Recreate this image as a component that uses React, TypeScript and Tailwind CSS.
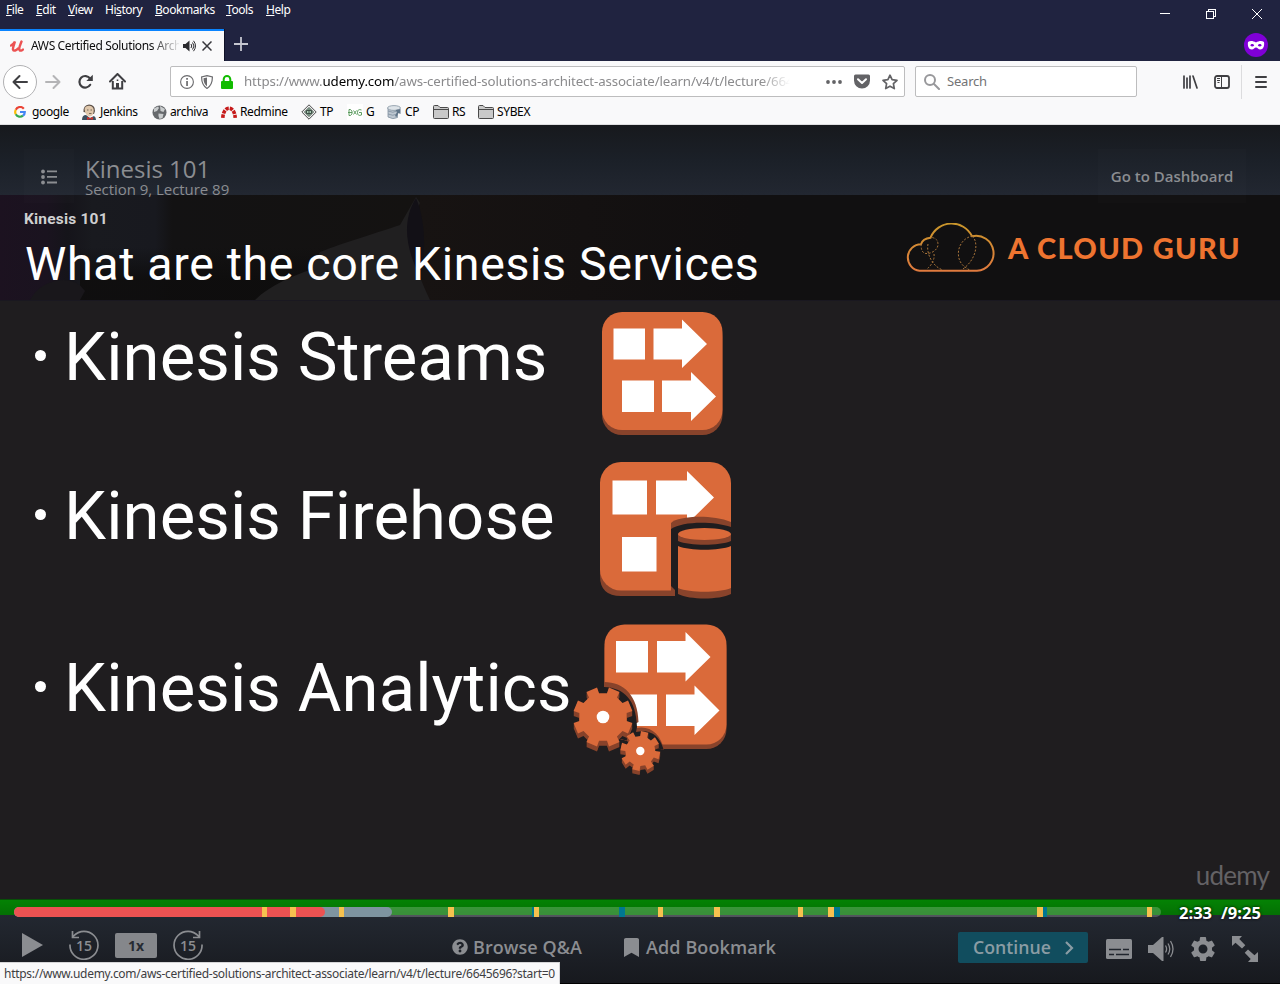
import React from "react";
import { FaQuestionCircle, FaBookmark } from "react-icons/fa";
import { MdSettings } from "react-icons/md";

const UI = "font-['Noto_Sans','Open_Sans',sans-serif]";
const OPEN = "font-['Open_Sans','Noto_Sans',sans-serif]";
const ROBOTO = "font-['Roboto',sans-serif]";

function MenuBar() {
  return (
    <div className="flex h-[29px] items-start">
      <nav className="flex pt-[2px] text-[12px] leading-4 tracking-[-0.45px] whitespace-nowrap text-white">
        <span className="ml-1.5 w-[30px]"><u>F</u>ile</span>
        <span className="w-8"><u>E</u>dit</span>
        <span className="w-[37px]"><u>V</u>iew</span>
        <span className="w-[50px]">Hi<u>s</u>tory</span>
        <span className="w-[71px]"><u>B</u>ookmarks</span>
        <span className="w-10"><u>T</u>ools</span>
        <span><u>H</u>elp</span>
      </nav>
      <svg className="mt-2 ml-auto h-3 w-[104px]" viewBox="0 0 104 12" fill="none" stroke="#fff" shapeRendering="crispEdges">
        <path d="M0 5.500h10M46.500 3.500h7v7h-7zM48.500 3V1.500h7v7H54" />
        <path d="M92 1l10 10M102 1L92 11" shapeRendering="auto" />
      </svg>
      <div className="w-4" />
    </div>
  );
}

function TabStrip() {
  return (
    <div className="flex h-8 items-stretch">
      <div className="flex w-[224px] items-center border-t-2 border-[#0a84ff] bg-[#f9f9fa]">
        <svg className="ml-[10px] h-3 w-[14px]" viewBox="0 0 14 12" fill="none" stroke="#ec5252" strokeWidth="2.400" strokeLinecap="round">
          <path d="M1 5.500C3 4.500 4.500 2.800 5 1.500C4 5 2.500 8 3 9.500C3.700 11.500 6.500 10.500 8 8.500M11.500 1.500C10.500 4 8.500 8 9.500 10C10.300 11.200 12 10.500 13 9.500" />
        </svg>
        <div className="ml-[7px] w-[148px] overflow-hidden text-[12px] tracking-[-0.36px] whitespace-nowrap text-[#0c0c0d] [mask-image:linear-gradient(to_right,#000_120px,transparent_150px)]">
          AWS Certified Solutions Architect
        </div>
        <svg className="ml-1 h-3 w-[13px]" viewBox="0 0 13 12">
          <path fill="#2a2a2e" d="M0 4h2.500L6.500.5v11L2.500 8H0z" />
          <path fill="none" stroke="#2a2a2e" d="M8 4q1.500 2 0 4M9.500 2.500q3 3.500 0 7M10.500 .8q4 5 0 10.400" />
        </svg>
        <svg className="ml-[6px] h-[10px] w-[10px]" viewBox="0 0 10 10" stroke="#38383d" strokeWidth="1.500"><path d="M.5.5l9 9M9.500.5l-9 9" /></svg>
      </div>
      <div className="flex w-8 items-center border-l border-[#0f1126] pl-[9px]">
        <svg className="-mt-[2px] h-[14px] w-[14px]" viewBox="0 0 14 14" stroke="#c5c6d0" strokeWidth="1.800"><path d="M7 0v14M0 7h14" /></svg>
      </div>
      <svg className="mt-1 mr-3 ml-auto h-6 w-6" viewBox="0 0 24 24">
        <circle cx="12" cy="12" r="12" fill="#8000d7" />
        <path fill="#fff" fillRule="evenodd" d="M4 9c2-1.500 5-1.300 8 .5 3-1.800 6-2 8-.5.7 4-.8 7.500-3.800 7.500-1.900 0-2.700-2-4.200-2s-2.300 2-4.200 2C4.800 16.500 3.300 13 4 9zm2.300 3.500c1 1.200 2.900 1.200 3.900 0-1-1.900-3.100-1.900-3.900 0zm7.500 0c1 1.200 2.900 1.200 3.900 0-.8-1.900-2.900-1.900-3.900 0z" />
      </svg>
    </div>
  );
}

function NavBar() {
  return (
    <div className="flex h-[41px] items-center bg-[#f9f9fa]">
      <div className="ml-[3px] flex h-[34px] w-[34px] items-center justify-center rounded-full border border-[#b1b1b3] bg-white">
        <svg className="h-4 w-4" viewBox="0 0 16 16" fill="none" stroke="#3f3f42" strokeWidth="2" strokeLinecap="round" strokeLinejoin="round"><path d="M15 8H1.500M7.500 2l-6 6 6 6" /></svg>
      </div>
      <svg className="ml-2 h-4 w-4" viewBox="0 0 16 16" fill="none" stroke="#b4b4b6" strokeWidth="2" strokeLinecap="round" strokeLinejoin="round"><path d="M1 8h13.500M8.500 2l6 6-6 6" /></svg>
      <svg className="ml-4 h-4 w-4" viewBox="0 0 16 16"><path d="M13.200 10.800A5.800 5.800 0 1 1 13 4.500" fill="none" stroke="#3f3f42" strokeWidth="2.200" strokeLinecap="round" /><path fill="#3f3f42" d="M15.800.8V7H9.300z" /></svg>
      <svg className="ml-4 h-[17px] w-[17px]" viewBox="0 0 17 17"><path d="M1 8.500L8.500 1 16 8.500" fill="none" stroke="#3f3f42" strokeWidth="2" strokeLinecap="round" strokeLinejoin="round" /><path d="M3.800 8v7.500h9.400V8" fill="none" stroke="#3f3f42" strokeWidth="2" /><path fill="#3f3f42" d="M7 10h3v6H7zM7.700 6.500h1.600v1.500H7.700z" /></svg>
      <div className="ml-11 flex h-[31px] w-[735px] items-center rounded-[2px] border border-[#bdbdbe] bg-white">
        <svg className="ml-[9px] h-[14px] w-[14px]" viewBox="0 0 14 14"><circle cx="7" cy="7" r="6.400" fill="none" stroke="#6b6b6e" strokeWidth="1.100" /><path fill="#6b6b6e" d="M6.200 6h1.700v5H6.200zM6.200 3h1.700v1.700H6.200z" /></svg>
        <svg className="ml-[7px] h-[14px] w-3" viewBox="0 0 12 14"><path d="M6 .6L11.400 2c0 6-1.400 9-5.400 11.400C2 11 .6 8 .6 2z" fill="none" stroke="#6b6b6e" strokeWidth="1.200" /><path fill="#6b6b6e" d="M6 2.500v9C3.500 9.500 2.500 7 2.500 3.300z" /></svg>
        <svg className="ml-2 h-[14px] w-3" viewBox="0 0 12 14"><rect y="6" width="12" height="8" rx="1" fill="#12bc00" /><path d="M2.700 7V4.300a3.300 3.300 0 0 1 6.600 0V7" fill="none" stroke="#12bc00" strokeWidth="2" /></svg>
        <div className="mt-px ml-[11px] w-[546px] overflow-hidden text-[13.300px] tracking-[-0.14px] whitespace-nowrap text-[#8a8a8c] [mask-image:linear-gradient(to_right,#000_516px,transparent_546px)]">
          https://www.<span className="text-black">udemy.com</span>/aws-certified-solutions-architect-associate/learn/v4/t/lecture/6645696
        </div>
        <svg className="ml-9 h-4 w-4" viewBox="0 0 16 16" fill="#636366"><circle cx="2" cy="8" r="1.900" /><circle cx="8" cy="8" r="1.900" /><circle cx="14" cy="8" r="1.900" /></svg>
        <svg className="ml-[12px] h-[15px] w-4" viewBox="0 0 16 15"><path fill="#636366" d="M1.500.5h13A1.500 1.500 0 0 1 16 2v4.500a8 8 0 0 1-16 0V2A1.500 1.500 0 0 1 1.500.5z" /><path d="M4 5.200l4 3.800 4-3.800" fill="none" stroke="#fff" strokeWidth="2" strokeLinecap="round" strokeLinejoin="round" /></svg>
        <svg className="ml-3 h-4 w-4" viewBox="0 0 16 16"><path d="M8 1.200l2.100 4.500 4.900.6-3.600 3.400.9 4.900L8 12.200l-4.300 2.400.9-4.900L1 6.300l4.900-.6z" fill="none" stroke="#636366" strokeWidth="1.700" strokeLinejoin="round" /></svg>
      </div>
      <div className="ml-[10px] flex h-[31px] w-[222px] items-center rounded-[2px] border border-[#bdbdbe] bg-white">
        <svg className="ml-2 h-4 w-4" viewBox="0 0 16 16" fill="none" stroke="#98989b" strokeWidth="2" strokeLinecap="round"><circle cx="6" cy="6" r="5" /><path d="M10 10l5 5" /></svg>
        <span className="mt-px ml-[7px] text-[13px] tracking-[-0.2px] text-[#737375]">Search</span>
      </div>
      <svg className="ml-[46px] h-[14px] w-[15px]" viewBox="0 0 15 14" stroke="#3f3f42" strokeWidth="1.700" strokeLinecap="round"><path d="M1 1v12M4 3v10M7 1v12M10 1l4 12" /></svg>
      <svg className="ml-4 h-4 w-4" viewBox="0 0 16 16"><rect x="1" y="2" width="14" height="12" rx="2" fill="none" stroke="#3f3f42" strokeWidth="1.800" /><path stroke="#3f3f42" d="M7.500 2v12M3 4.500h3M3 6.500h3M3.500 8.500h2" /></svg>
      <div className="ml-[11px] h-[34px] w-px bg-[#dcdcde]" />
      <svg className="ml-[13px] h-3 w-3" viewBox="0 0 12 12" stroke="#3f3f42" strokeWidth="2" strokeLinecap="round"><path d="M1 1h10M1 6h10M1 11h10" /></svg>
    </div>
  );
}

function FolderIcon() {
  return (
    <svg className="h-[14px] w-4" viewBox="0 0 16 14" fill="#c9c9c9" stroke="#4a4a4a"><path d="M.5 12.500V1.500q0-1 1-1h3.500l2 2h7.500q1 0 1 1v9q0 1-1 1h-13q-1 0-1-1z" /><path d="M.5 4.500h15" /></svg>
  );
}

const MARKS: { label: string; width: string; icon: React.ReactNode }[] = [
  { label: "google", width: "w-[68px]", icon: <svg className="h-3 w-3 shrink-0" viewBox="0 0 12 12" fill="none" strokeWidth="2.200"><path stroke="#ea4335" d="M9.800 2.700A4.800 4.800 0 0 0 1.800 3.700" /><path stroke="#fbbc05" d="M1.800 3.700a4.800 4.800 0 0 0 0 4.600" /><path stroke="#34a853" d="M1.800 8.300A4.800 4.800 0 0 0 9 9.700" /><path stroke="#4285f4" d="M9 9.700A4.600 4.600 0 0 0 10.800 6H6" /></svg> },
  { label: "Jenkins", width: "w-[71px]", icon: <svg className="h-4 w-4 shrink-0" viewBox="0 0 16 16"><path fill="#5c5048" d="M2.500 8Q2 1 8 .5q6 0 6 6.500l-1 3z" /><path fill="#e0c8ac" d="M3.500 5q1-3.500 5-3.200 4.500.7 4.200 5.200-.4 5-4 5.500-3.200-.5-4.400-4z" /><path fill="#3d5060" d="M1 16q0-5 4-5l4 3 4-2q2 1 2 4z" /><path fill="#c8322e" d="M6 13l3 1 3-1v3l-3-1-3 1z" /><path stroke="#5c5048" strokeWidth=".8" d="M6 6h1.500M9.500 6H11M8 9.500h2.500" /></svg> },
  { label: "archiva", width: "w-[69px]", icon: <svg className="h-[15px] w-[15px] shrink-0" viewBox="0 0 15 15"><circle cx="7.500" cy="7.500" r="7" fill="#66696c" /><path fill="#c9cccd" d="M2 3.500L6 1.500l1 1.500-2 3-3 1zM8 1l5 3-1.500 3-3-1zM6.500 8.500l5 .5-1 4-3 1-1-3z" /></svg> },
  { label: "Redmine", width: "w-[80px]", icon: <svg className="h-3 w-4 shrink-0" viewBox="0 0 16 12"><path d="M1.800 11.800C2.500 -1 13.500 -1 14.200 11.800" fill="none" stroke="#c61a1a" strokeWidth="3.600" strokeDasharray="3.400 1" /></svg> },
  { label: "TP", width: "w-[46px]", icon: <svg className="h-4 w-4 shrink-0" viewBox="0 0 16 16" fill="none" stroke="#4b4b4b"><path fill="#eee" d="M8 .8L15.200 8 8 15.200.8 8z" /><path fill="#a9cdb4" stroke="#3f4f46" d="M8 3.500L12.500 8 8 12.500 3.500 8zM5.500 6.500h5v3h-5zM8 5v6" /></svg> },
  { label: "G", width: "w-[40px]", icon: <div className="flex h-4 w-4 shrink-0 items-center justify-center bg-white"><svg className="h-[7px] w-[14px]" viewBox="0 0 14 7" fill="none" stroke="#4f9452" strokeWidth=".9"><path d="M0 3.500h4M1 .5h1.500q3.500 3 0 6H1zM5.500 1.500l3 4M5.500 5.500l3-4M13.500 1q-4-1.500-4 2.500t4 2.500V3.500H11" /></svg></div> },
  { label: "CP", width: "w-[46px]", icon: <svg className="h-[15px] w-[15px] shrink-0" viewBox="0 0 15 15"><path fill="#bcc6d0" stroke="#8090a0" strokeWidth=".8" d="M1 3v9q5 3 9.500.5V3z" /><ellipse cx="7" cy="3" rx="6.500" ry="2.400" fill="#dde3e8" stroke="#8594a2" strokeWidth=".8" /><path d="M1 6q5 2.500 9 0M1 9q5 2.500 9 0" stroke="#8090a0" strokeWidth=".8" fill="none" /><path fill="#5f7488" d="M8.500 5l5-1v5l-2-1-2 4-1.500-1 2-4z" /></svg> },
  { label: "RS", width: "w-[45px]", icon: <FolderIcon /> },
  { label: "SYBEX", width: "w-[60px]", icon: <FolderIcon /> },
];

function BookmarksBar() {
  return (
    <div className="flex h-[23px] items-center border-b border-[#dfdfe1] bg-[#f9f9fa] pb-[2px] pl-[13px] text-[12px] tracking-[-0.36px] text-black">
      {MARKS.map((m) => (
        <div key={m.label} className={"flex shrink-0 items-center whitespace-nowrap " + m.width}>
          <div className={m.label === "google" ? "mr-[6px] ml-px" : "mr-[3px]"}>{m.icon}</div>
          {m.label}
        </div>
      ))}
    </div>
  );
}

function LectureHeader() {
  return (
    <header className={"relative z-10 flex h-[70px] items-start bg-linear-to-b from-[#17191d] via-[#1b2028] to-[#222731] pt-6 text-[#8b8d91] " + OPEN}>
      <div className="ml-6 flex h-[54px] w-[50px] items-center justify-center bg-white/1">
        <svg className="mt-px h-4 w-4" viewBox="0 0 16 16" fill="#8b8d91"><circle cx="2" cy="2.500" r="1.900" /><circle cx="2" cy="8" r="1.900" /><circle cx="2" cy="13.500" r="1.900" /><path d="M6 1.500h10v1.800H6zM6 7h10v1.800H6zM6 12.600h10v1.800H6z" /></svg>
      </div>
      <div className="ml-[11px] whitespace-nowrap">
        <div className="mt-[5px] text-[24px] leading-[30px]">Kinesis 101</div>
        <div className="-mt-px text-[15px] leading-3 tracking-[-0.04px]">Section 9, Lecture 89</div>
      </div>
      <div className="mr-[34px] ml-auto flex h-[54px] w-[148px] items-center justify-center bg-white/1 text-[15px] font-semibold whitespace-nowrap">Go to Dashboard</div>
    </header>
  );
}

function CloudLogo() {
  return (
    <svg className="h-[50px] w-[92px]" viewBox="905 223 92 50" fill="none">
      <defs>
        <linearGradient id="cloud" x1="0" y1="0" x2="0" y2="1"><stop offset="0" stopColor="#c9962b" /><stop offset="1" stopColor="#e07a3e" /></linearGradient>
      </defs>
      <path stroke="url(#cloud)" strokeWidth="2" d="M919.500 270.700a13.300 13.300 0 0 1 1.500-26.500c1-3.500 4.500-6 9.500-6.500a22.800 22.800 0 0 1 41.500-1.500a17.500 17.500 0 1 1 5 34.500z" />
      <g stroke="#a8743a" strokeWidth="1" strokeDasharray="2 1.600"><path d="M921 244q0 10 6 9.500c5 0 11-4 11-9q0-6-6-7M928 244c-2 10 5 23 15 26M934 254q1 8-7 15M972.500 236c-16 3-19 25-6 32l3 2M972.500 236c7 8 3 25-11 34" /></g>
    </svg>
  );
}

function Banner() {
  return (
    <div className="grid h-[105px] bg-[#111011] *:col-start-1 *:row-start-1">
      <svg className="h-[105px] w-[1280px]" viewBox="0 0 1280 105">
        <defs>
          <linearGradient id="left"><stop offset="0" stopColor="#1c1220" /><stop offset=".11" stopColor="#1a131f" /><stop offset=".16" stopColor="#15141a" /><stop offset=".22" stopColor="#191a1f" /><stop offset=".37" stopColor="#18191f" /><stop offset=".41" stopColor="#131213" /><stop offset="1" stopColor="#141211" /></linearGradient>
          <linearGradient id="shade" x1="0" y1="0" x2="0" y2="1"><stop offset=".5" stopColor="#0e0d0d" stopOpacity="0" /><stop offset=".8" stopColor="#0e0d0d" stopOpacity=".9" /></linearGradient>
          <linearGradient id="right"><stop offset="0" stopColor="#171312" /><stop offset="1" stopColor="#110f10" /></linearGradient>
        </defs>
        <rect width="420" height="105" fill="url(#left)" />
        <rect x="80" width="340" height="105" fill="url(#shade)" />
        <rect x="420" width="330" height="105" fill="url(#right)" />
        <path fill="#201f20" d="M255 105c15-15 40-25 55-30l10-18c25-10 60-20 80-27l16-28 4 6c-14 30-8 60 10 97z" />
        <path fill="#121016" d="M416 3c-14 22-11 50 4 78 6-20 6-55-4-78z" />
        <path fill="#19171b" d="M55 86q20-4 30 10l-5 9H30q8-15 25-19z" />
      </svg>
      <div className={"flex items-start pl-6 " + ROBOTO}>
        <div className="whitespace-nowrap">
          <div className="mt-[14px] text-[15.500px] leading-5 font-bold tracking-[0.2px] text-[#cfcfd0]">Kinesis 101</div>
          <div className="mt-[9px] pl-px text-[46.500px] leading-[52px] tracking-[0.66px] text-white">What are the core Kinesis Services</div>
        </div>
        <div className="mt-[28px] ml-auto flex w-[375px] items-center">
          <CloudLogo />
          <span className="-mt-px ml-[11px] font-['Lato',sans-serif] text-[29px] leading-9 font-black tracking-[1.35px] whitespace-nowrap text-[#ee7430]">A CLOUD GURU</span>
        </div>
      </div>
    </div>
  );
}

function gear(cx: number, cy: number, outer: number, inner: number, start: number) {
  const pts: string[] = [];
  for (let i = 0; i < 8; i++) {
    const mid = start + i * 45;
    const corners: [number, number][] = [[inner, -13], [outer, -11], [outer, 11], [inner, 13]];
    for (const [r, d] of corners) {
      const a = ((mid + d) * Math.PI) / 180;
      pts.push((cx + r * Math.cos(a)).toFixed(2) + "," + (cy + r * Math.sin(a)).toFixed(2));
    }
  }
  return pts.join(" ");
}

function Gear({ cx, cy, outer, inner, start, hole, depth }: { cx: number; cy: number; outer: number; inner: number; start: number; hole: number; depth: number }) {
  const points = gear(cx, cy, outer, inner, start);
  return (
    <g>
      {Array.from({ length: depth }, (_, i) => <polygon key={i} points={points} fill="#88432b" transform={"translate(0 " + (depth - i) + ")"} />)}
      <polygon points={points} fill="#da6a3a" />
      <circle cx={cx} cy={cy} r={hole} fill="#fff" />
    </g>
  );
}

function StreamsIcon() {
  return (
    <svg className="h-[126px] w-[122px]" viewBox="601 310 122 126">
      <rect x="602" y="317" width="120.500" height="118" rx="20" fill="#88432b" />
      <rect x="602" y="312" width="120.500" height="118" rx="20" fill="#da6a3a" />
      <path fill="#fff" d="M613.500 328.500h31.500v31h-31.500zM653.500 328.500h28.500v-9l25 24.500-25 24v-8.500h-28.500zM622 380.500h32v31.500h-32zM662 380.500h29v-8.500l25 24.500-25 24.500v-9h-29z" />
    </svg>
  );
}

function FirehoseIcon() {
  return (
    <svg className="h-[138px] w-[133px]" viewBox="599 461 133 138">
      <path fill="#88432b" d="M600 482v94q0 20 21 20h54v-10h56V490z" />
      <rect x="600" y="462" width="131" height="128.500" rx="21" fill="#da6a3a" />
      <path fill="#fff" d="M612.500 480.500h34.500v34h-34.500zM656 480.500h31v-9.500l27 26.500-27 26.500v-9.500h-31zM622 537h34.500v34.500h-34.500z" />
      <path fill="#88432b" d="M671 530v-7c7-7 40-9 60-1v12z" />
      <path fill="#1f1d1f" d="M671 599v-70c12-8 42-8 60-2v72z" />
      <path fill="#88432b" d="M671 586l4 4v6h-4z" />
      <path fill="#da6a3a" d="M678 546c12 5 41 5 53 0v44c-12 6-41 6-53 0z" />
      <path fill="#88432b" d="M678 588c12 5 41 5 53 0v6c-12 6-41 6-53 0zM678 534v7c12 5 41 5 53 0v-7z" />
      <ellipse cx="704.500" cy="534" rx="26.500" ry="6" fill="#da6a3a" />
    </svg>
  );
}

function AnalyticsIcon() {
  return (
    <svg className="h-[154px] w-[156px]" viewBox="573 623 156 154">
      <defs><clipPath id="tile"><path d="M604 623h124v127H664L604 735z" /></clipPath></defs>
      <g clipPath="url(#tile)">
        <rect x="604.500" y="629" width="122" height="120" rx="20" fill="#88432b" />
        <rect x="604.500" y="624.500" width="122" height="120" rx="20" fill="#da6a3a" />
        <path fill="#fff" d="M616 641h32v31.500h-32zM657 641h28.500v-9l25 25-25 24.500v-9h-28.500zM625 694.500h32v31.500h-32zM666 694.500h28.500v-9l25 25-25 24.500v-9h-28.500z" />
        <path fill="#88432b" d="M604 682c20 0 34 14 34.500 40l-34.500 20zM636 728c14-3 25 6 28 22h-28z" />
        <path fill="#1f1d1f" d="M604 687c20 1 32 12 33 40l-1 5c14-3 24 3 28 19h-60z" />
      </g>
      <Gear cx={603} cy={717} outer={30} inner={24} start={-22.5} hole={6.3} depth={5} />
      <Gear cx={640.3} cy={751} outer={20} inner={15} start={13} hole={4.200} depth={4} />
    </svg>
  );
}

function Bullet({ text, size }: { text: string; size: string }) {
  return (
    <div className={"flex items-center whitespace-nowrap " + size}>
      <span className="ml-[35px] h-[11px] w-[11px] rounded-full bg-white" />
      <span className="mt-[3px] ml-[18px] text-[67px] leading-[78px] tracking-[0.1px] text-white">{text}</span>
    </div>
  );
}

function Slide() {
  return (
    <div className={"flex h-[599px] flex-col border-t border-[#1a1820] bg-[#1f1d1f] " + ROBOTO}>
      <div className="flex h-[160px] items-start pt-[9px]">
        <Bullet text="Kinesis Streams" size="w-[601px] h-[91px]" />
        <StreamsIcon />
      </div>
      <div className="flex h-[162px] items-start">
        <Bullet text="Kinesis Firehose" size="w-[599px] h-[107px]" />
        <FirehoseIcon />
      </div>
      <div className="flex h-[160px] items-start">
        <Bullet text="Kinesis Analytics" size="w-[573px] h-[127px]" />
        <AnalyticsIcon />
      </div>
      <div className="mt-auto mr-[11px] mb-[6px] self-end font-['Lato',sans-serif] text-[26px] leading-9 tracking-[-0.8px] text-[#646265]">udemy</div>
    </div>
  );
}

const TICKS = [
  { x: 262, w: 5, c: "bg-[#f6c14f]" }, { x: 290, w: 6, c: "bg-[#f6c14f]" }, { x: 339, w: 5, c: "bg-[#f6c14f]" },
  { x: 448, w: 6, c: "bg-[#f6c14f]" }, { x: 532, w: 2, c: "bg-[#007791]" }, { x: 534, w: 5, c: "bg-[#f6c14f]" },
  { x: 619, w: 6, c: "bg-[#007791]" }, { x: 658, w: 5, c: "bg-[#f6c14f]" }, { x: 714, w: 6, c: "bg-[#f6c14f]" },
  { x: 798, w: 5, c: "bg-[#f6c14f]" }, { x: 828, w: 6, c: "bg-[#f6c14f]" }, { x: 834, w: 6, c: "bg-[#007791]" },
  { x: 1037, w: 6, c: "bg-[#f6c14f]" }, { x: 1043, w: 4, c: "bg-[#007791]" }, { x: 1147, w: 5, c: "bg-[#f6c14f]" },
];

function Progress() {
  return (
    <div className="relative z-10 flex h-4 items-start border-t border-[#075007] bg-linear-to-b from-[#048204] to-[#047004] pl-[14px]">
      <div className="relative mt-[7px] h-[10px] w-[1147px] overflow-hidden rounded-[5px] bg-white/21">
        <div className="flex h-[10px] w-[378px] rounded-r-[5px] bg-[#7e94a0]">
          <div className="h-[10px] w-[311px] rounded-r-[5px] bg-[#ec5252]" />
        </div>
        {TICKS.map((t) => <i key={t.x} className={"absolute top-0 h-[10px] " + t.c} style={{ left: t.x - 14, width: t.w }} />)}
      </div>
      <div className={"ml-[18px] flex text-[16.500px] leading-[26px] font-bold whitespace-nowrap text-white [text-shadow:0_0_3px_#000] " + OPEN}>
        <span className="w-[42px]">2:33</span>
        <span>/9:25</span>
      </div>
    </div>
  );
}

function SkipIcon({ flip }: { flip?: boolean }) {
  return (
    <div className="grid h-8 w-[30px] place-items-center *:col-start-1 *:row-start-1">
      <svg className={"h-[30px] w-[30px] " + (flip ? "-scale-x-100" : "")} viewBox="0 0 30 30" fill="none" stroke="#8b8d91" strokeWidth="1.700"><path d="M1 14.500a14 14 0 1 0 14-13.200q-6 0-11 5.200M3.500 1v6.500H10" /></svg>
      <span className="text-[14px] font-semibold text-[#8b8d91]">15</span>
    </div>
  );
}

function Controls() {
  return (
    <div className={"flex h-[69px] items-start border-b border-black bg-linear-to-b from-[#232831] to-[#17191e] pt-[14px] text-[18px] font-semibold whitespace-nowrap text-[#8b8d91] " + OPEN}>
      <svg className="mt-1 ml-[22px] h-6 w-[21px]" viewBox="0 0 21 24"><path fill="#8b8d91" d="M0 0l21 12L0 24z" /></svg>
      <div className="ml-[26px]"><SkipIcon /></div>
      <div className="mt-1 ml-4 flex h-[25px] w-[42px] items-center justify-center rounded-[2px] bg-[#85878b] text-[14px] font-bold text-[#272b33]">1x</div>
      <div className="ml-4"><SkipIcon flip /></div>
      <div className="ml-[249px] flex h-9 w-[172px] items-center">
        <FaQuestionCircle className="h-4 w-4" />
        <span className="ml-[5px] tracking-[0.05px]">Browse Q&amp;A</span>
      </div>
      <div className="flex h-9 w-[334px] items-center">
        <FaBookmark className="h-[19px] w-[15px]" preserveAspectRatio="none" />
        <span className="ml-[7px] tracking-[0.1px]">Add Bookmark</span>
      </div>
      <div className="mt-[3px] flex h-[31px] w-[130px] items-center rounded-[2px] bg-[#114d5e] pl-[15px] text-[17.700px] text-[#8a9ca4]">
        Continue
        <svg className="mr-[14px] ml-auto h-[14px] w-[9px]" viewBox="0 0 9 14" fill="none" stroke="#8a9ca4" strokeWidth="2.200"><path d="M1 1l6 6-6 6" /></svg>
      </div>
      <svg className="mt-[10px] ml-[18px] h-5 w-[26px]" viewBox="0 0 26 20"><rect width="26" height="20" rx="1.500" fill="#8b8d91" /><path stroke="#20252d" strokeWidth="1.600" d="M3 10.500h12M17 10.500h6M3 15.500h5M10 15.500h13" /></svg>
      <svg className="mt-2 ml-4 h-6 w-[26px]" viewBox="0 0 26 24"><path fill="#8b8d91" d="M0 8h5L14 0h1.500v24H14L5 16H0z" /><path fill="none" stroke="#8b8d91" strokeWidth="1.300" d="M17.500 8.500q2.200 3.500 0 7M20 6.500q3.500 5.500 0 11M22.500 4q5 8 0 16" /></svg>
      <MdSettings className="mt-[5px] ml-[14px] h-[30px] w-[30px]" />
      <svg className="mt-[7px] ml-[14px] h-[26px] w-[26px]" viewBox="0 0 26 26" fill="#8b8d91"><path d="M0 0h10L7.300 3l6 6.200-3.300 3.300L3.500 6.800 0 10z" /><path d="M26 26H16l2.700-3-6-6.200 3.300-3.300 6.500 5.700L26 16z" /></svg>
    </div>
  );
}

export default function App() {
  return (
    <div className={"relative flex h-[984px] w-[1280px] flex-col overflow-hidden bg-[#202340] " + UI}>
      <MenuBar />
      <TabStrip />
      <NavBar />
      <BookmarksBar />
      <LectureHeader />
      <Banner />
      <Slide />
      <Progress />
      <Controls />
      <div className="absolute bottom-0 left-0 z-20 h-[22px] w-[560px] overflow-hidden border-t border-r border-[#d5d5d7] bg-[#f9f9fa] pl-1 text-[12px] leading-[22px] tracking-[-0.285px] whitespace-nowrap text-[#3e3e42]">
        https://www.udemy.com/aws-certified-solutions-architect-associate/learn/v4/t/lecture/6645696?start=0
      </div>
    </div>
  );
}
